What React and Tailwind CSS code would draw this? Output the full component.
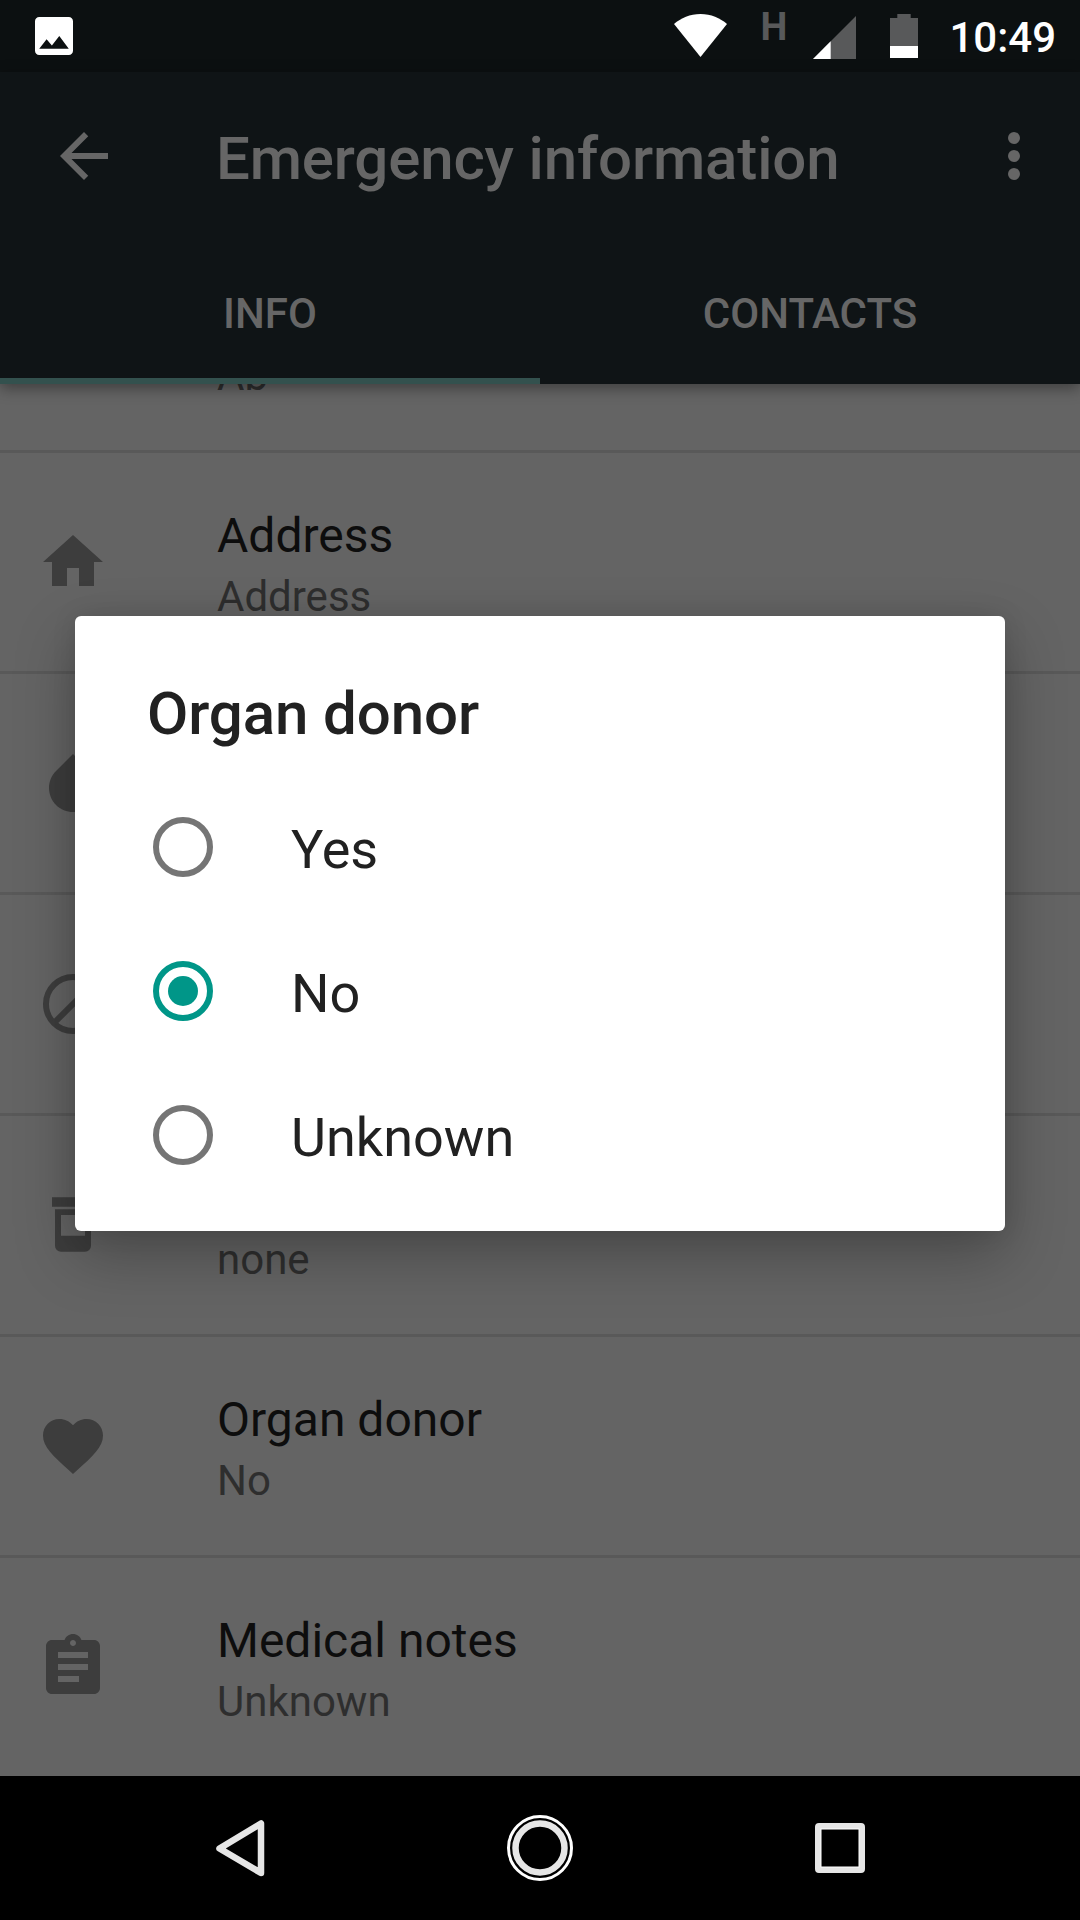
import React from 'react';

const infoRows = [
  { id: 1, summary: 'Ab' },
  { id: 2, icon: 'home', title: 'Address', summary: 'Address' },
  { id: 3, icon: 'drop' },
  { id: 4, icon: 'block' },
  { id: 5, icon: 'bottle', summary: 'none' },
  { id: 6, icon: 'heart', title: 'Organ donor', summary: 'No' },
  { id: 7, icon: 'notes', title: 'Medical notes', summary: 'Unknown' },
];

const options = ['Yes', 'No', 'Unknown'];

const icons = {
  home: <path d="M10 20v-6h4v6h5v-8h3L12 3 2 12h3v8z" />,
  drop: <path d="M17.66 8L12 2.35 6.34 8C4.78 9.56 4 11.64 4 13.64s.78 4.11 2.34 5.67 3.61 2.35 5.66 2.35 4.1-.79 5.66-2.35S20 15.64 20 13.64 19.22 9.56 17.66 8z" />,
  block: (
    <g fill="none" stroke="currentColor" strokeWidth="2">
      <circle cx="12" cy="12" r="9" />
      <path d="M5.7 18.3L18.3 5.7" />
    </g>
  ),
  bottle: (
    <>
      <path d="M5 2.75h14v3.15H5z" />
      <path fillRule="evenodd" d="M6 6.75h12v12.2a2 2 0 0 1-2 2H8a2 2 0 0 1-2-2zM8 8.7v6.9h8V8.7z" />
    </>
  ),
  heart: <path d="M12 21.35l-1.45-1.32C5.4 15.36 2 12.28 2 8.5 2 5.42 4.42 3 7.5 3c1.74 0 3.41.81 4.5 2.09C13.09 3.81 14.76 3 16.5 3 19.58 3 22 5.42 22 8.5c0 3.78-3.4 6.86-8.55 11.54L12 21.35z" />,
  notes: <path d="M19 3h-4.18C14.4 1.84 13.3 1 12 1c-1.3 0-2.4.84-2.82 2H5c-1.1 0-2 .9-2 2v14c0 1.1.9 2 2 2h14c1.1 0 2-.9 2-2V5c0-1.1-.9-2-2-2zm-7 0c.55 0 1 .45 1 1s-.45 1-1 1-1-.45-1-1 .45-1 1-1zm2 14H7v-2h7v2zm3-4H7v-2h10v2zm0-4H7V7h10v2z" />,
};

const StatusBar = () => {
  return (
    <div className="flex h-[72px] shrink-0 items-start justify-between bg-[#0c1011] pl-[35px] pr-6">
      <svg className="mt-[17px] h-[38px] w-[38px]" viewBox="3 3 18 18" fill="#fff">
        <path d="M21 19V5c0-1.1-.9-2-2-2H5c-1.1 0-2 .9-2 2v14c0 1.1.9 2 2 2h14c1.1 0 2-.9 2-2zM8.5 13.5l2.5 3.01L14.5 12l4.5 6H5l3.5-4.5z" />
      </svg>
      <div className="flex items-start">
        <svg className="mt-[14px] h-[43px] w-[53px]" viewBox="0 0 53 43" fill="#fff">
          <path d="M0 10C7 4 16 0 26.500 0S46 4 53 10L26.500 43z" />
        </svg>
        <span className="ml-[33px] w-[27px] pt-2 text-[38px] leading-[39px] font-bold text-[#58595a]">H</span>
        <svg className="mt-[16px] ml-[26px] h-[43px] w-[43px]" viewBox="0 0 43 43">
          <path d="M43 0v43H0z" fill="#58595a" />
          <path d="M17.700 25.300V43H0z" fill="#fff" />
        </svg>
        <svg className="mt-[14px] ml-[34px] h-[44px] w-[28px]" viewBox="0 0 28 44">
          <path d="M7.300 0h13.400v4H28v40H0V4h7.300z" fill="#58595a" />
          <path d="M0 32h28v12H0z" fill="#fff" />
        </svg>
        <span className="ml-[31px] pt-[13px] text-[42px] leading-[49px] font-medium text-white">10:49</span>
      </div>
    </div>
  );
};

const Header = () => {
  return (
    <div className="relative z-10 h-[312px] shrink-0 bg-[#0f1416] text-[#666] shadow-[0_4px_14px_rgba(0,0,0,0.4)]">
      <div className="flex h-[168px] items-center pl-12 pr-[30px]">
        <svg className="h-[72px] w-[72px]" viewBox="0 0 24 24" fill="currentColor">
          <path d="M20 11H7.830l5.590-5.590L12 4l-8 8 8 8 1.410-1.410L7.830 13H20v-2z" />
        </svg>
        <h1 className="ml-24 flex-1 pt-[5px] text-[60px] leading-[72px] font-medium tracking-[-0.15px]">Emergency information</h1>
        <svg className="h-[72px] w-[72px]" viewBox="0 0 24 24" fill="currentColor">
          <circle cx="12" cy="6" r="2" />
          <circle cx="12" cy="12" r="2" />
          <circle cx="12" cy="18" r="2" />
        </svg>
      </div>
      <div className="flex h-36 text-[42px] leading-[50px] font-medium">
        <div className="flex-1 border-b-[6px] border-[#33514e] pt-[49px] text-center">INFO</div>
        <div className="flex-1 pt-[49px] text-center">CONTACTS</div>
      </div>
    </div>
  );
};

const InfoRow = ({ icon, title, summary }) => {
  return (
    <div className="flex h-[221px] shrink-0 border-t-[3px] border-[#595959] pl-[37px]">
      <svg className="mt-[73px] h-[72px] w-[72px] text-[#3d3d3d]" viewBox="0 0 24 24" fill="currentColor">
        {icons[icon]}
      </svg>
      <div className="ml-[108px] pt-[51px]">
        <p className="h-16 text-[48px] leading-[64px] text-[#0d0d0d]">{title}</p>
        <p className="text-[42px] leading-[58px] text-[#2e2e2e]">{summary}</p>
      </div>
    </div>
  );
};

const Radio = ({ checked }) => {
  return (
    <svg className={checked ? 'h-[60px] w-[60px] text-[#009688]' : 'h-[60px] w-[60px] text-[#757575]'} viewBox="0 0 60 60">
      <circle cx="30" cy="30" r="27" fill="none" stroke="currentColor" strokeWidth="6" />
      {checked && <circle cx="30" cy="30" r="15" fill="currentColor" />}
    </svg>
  );
};

const DonorDialog = ({ value }) => {
  return (
    <div className="absolute top-[616px] left-[75px] z-20 h-[615px] w-[930px] rounded-[6px] bg-white text-[#212121] shadow-[0_24px_60px_rgba(0,0,0,0.28),0_0_24px_rgba(0,0,0,0.1)]">
      <h2 className="h-[159px] px-[72px] pt-[62px] text-[60px] leading-[72px] font-medium tracking-[-0.1px]">Organ donor</h2>
      {options.map((option) => (
        <div key={option} className="flex h-36 items-center pl-[78px]">
          <Radio checked={option === value} />
          <span className="ml-[78px] pt-[5px] text-[54px] leading-[64px]">{option}</span>
        </div>
      ))}
    </div>
  );
};

const NavBar = () => {
  return (
    <div className="flex h-36 shrink-0 items-center justify-between bg-black px-[204px]">
      <svg className="h-[72px] w-[72px]" viewBox="0 0 72 72" fill="none" stroke="#e6e6e6" strokeWidth="6.500" strokeLinejoin="round">
        <path d="M15.500 36.500L57 11.500v49.500z" />
      </svg>
      <svg className="h-[72px] w-[72px]" viewBox="0 0 72 72" fill="none">
        <circle cx="36" cy="36" r="31.500" stroke="#fff" strokeWidth="3" />
        <circle cx="36" cy="36" r="24.500" stroke="#e6e6e6" strokeWidth="6.500" />
      </svg>
      <svg className="h-[72px] w-[72px]" viewBox="0 0 72 72" fill="none">
        <rect x="14" y="14" width="44" height="44" rx="1" stroke="#e6e6e6" strokeWidth="6" strokeLinejoin="round" />
        <rect x="17" y="17" width="38" height="38" stroke="#fff" strokeWidth="1" />
      </svg>
    </div>
  );
};

const App = () => {
  return (
    <div className="relative flex h-[1920px] w-[1080px] flex-col overflow-hidden bg-[#646464] font-[Roboto,sans-serif]">
      <StatusBar />
      <Header />
      {/* list is scrolled to its end, the first row sits half under the tabs */}
      <div className="flex min-h-0 flex-1 flex-col justify-end overflow-hidden">
        {infoRows.map((row) => (
          <InfoRow key={row.id} {...row} />
        ))}
      </div>
      <DonorDialog value="No" />
      <NavBar />
    </div>
  );
};

export default App;
